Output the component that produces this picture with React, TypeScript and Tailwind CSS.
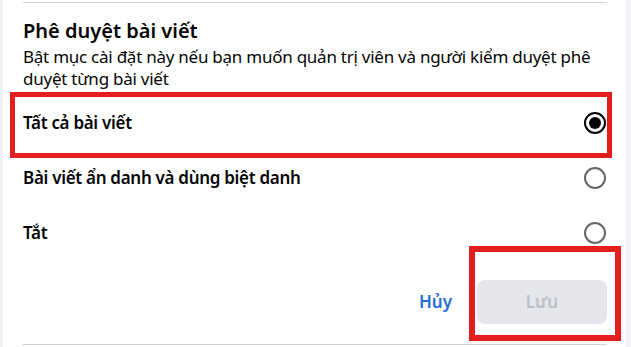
import React, { useState } from 'react';

const options = [
  { id: 'all', label: 'Tất cả bài viết' },
  { id: 'anon', label: 'Bài viết ẩn danh và dùng biệt danh' },
  { id: 'off', label: 'Tắt' },
];

const Radio: React.FC<{ checked: boolean }> = ({ checked }) => (
  <span
    className={
      checked
        ? 'flex h-[22px] w-[22px] items-center justify-center rounded-full border-2 border-[#050505]'
        : 'flex h-[22px] w-[22px] items-center justify-center rounded-full border-2 border-[#65676b]'
    }
  >
    {checked && <span className="h-[12px] w-[12px] rounded-full bg-[#050505]" />}
  </span>
);

const App: React.FC = () => {
  const [selected, setSelected] = useState('all');

  return (
    <div
      className="relative flex min-h-screen bg-[#f0f2f5] pl-[3px] pr-[5px]"
      style={{ fontFamily: '"Noto Sans", "Open Sans", sans-serif' }}
    >
      <div className="flex-1 bg-white pl-[20px] pr-[19px] pt-[2px]">
        <div className="border-t border-[#ced0d4]" />

        <h2 className="mt-[16px] text-[20px] font-semibold leading-[24px] text-[#050505]">Phê duyệt bài viết</h2>
        <p className="mt-[3px] text-[17px] leading-[22px] tracking-[-0.25px] text-[#050505]">
          Bật mục cài đặt này nếu bạn muốn quản trị viên và người kiểm duyệt phê duyệt từng bài viết
        </p>

        <div className="mt-[5px] flex flex-col">
          {options.map((o) => (
            <button
              key={o.id}
              onClick={() => setSelected(o.id)}
              className="flex h-[55px] items-center justify-between text-left"
            >
              <span className="text-[17px] font-semibold tracking-[-0.3px] text-[#050505]">{o.label}</span>
              <span className="pr-[1px]">
                <Radio checked={selected === o.id} />
              </span>
            </button>
          ))}
        </div>

        <div className="mt-[20px] flex items-center justify-end gap-[25px]">
          <button className="text-[17px] font-semibold text-[#216fdb]">Hủy</button>
          <button className="h-[44px] w-[130px] rounded-lg bg-[#e4e6eb] text-[17px] font-semibold text-[#bcc0c4]">
            Lưu
          </button>
        </div>

        <div className="mt-[20px] border-t border-[#ced0d4]" />
      </div>

      {/* annotation boxes */}
      <div className="pointer-events-none absolute left-[10px] top-[92px] h-[66px] w-[602px] border-[5px] border-[#e41e1e]" />
      <div className="pointer-events-none absolute left-[469px] top-[246px] h-[95px] w-[152px] border-[6px] border-[#e41e1e]" />
    </div>
  );
};

export default App;
